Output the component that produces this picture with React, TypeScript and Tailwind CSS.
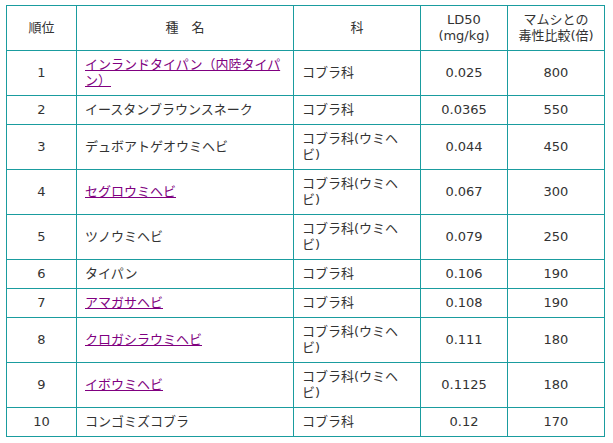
const rows = [
  { rank: "1", name: "インランドタイパン（内陸タイパン）", link: true, family: "コブラ科", ld: "0.025", ratio: "800" },
  { rank: "2", name: "イースタンブラウンスネーク", link: false, family: "コブラ科", ld: "0.0365", ratio: "550" },
  { rank: "3", name: "デュボアトゲオウミヘビ", link: false, family: "コブラ科(ウミヘビ)", ld: "0.044", ratio: "450" },
  { rank: "4", name: "セグロウミヘビ", link: true, family: "コブラ科(ウミヘビ)", ld: "0.067", ratio: "300" },
  { rank: "5", name: "ツノウミヘビ", link: false, family: "コブラ科(ウミヘビ)", ld: "0.079", ratio: "250" },
  { rank: "6", name: "タイパン", link: false, family: "コブラ科", ld: "0.106", ratio: "190" },
  { rank: "7", name: "アマガサヘビ", link: true, family: "コブラ科", ld: "0.108", ratio: "190" },
  { rank: "8", name: "クロガシラウミヘビ", link: true, family: "コブラ科(ウミヘビ)", ld: "0.111", ratio: "180" },
  { rank: "9", name: "イボウミヘビ", link: true, family: "コブラ科(ウミヘビ)", ld: "0.1125", ratio: "180" },
  { rank: "10", name: "コンゴミズコブラ", link: false, family: "コブラ科", ld: "0.12", ratio: "170" },
];

const cell = "border border-[#1a9c9f] px-[8px] py-[6px] align-middle";

export default function App() {
  return (
    <div
      className="min-h-screen bg-white pl-[6px] pt-[5px] text-[13px] leading-[16px] text-[#333333]"
      style={{ fontFamily: '"DejaVu Sans", "Noto Sans CJK JP", sans-serif' }}
    >
      <table className="w-[598px] table-fixed border-collapse">
        <colgroup>
          <col className="w-[70px]" />
          <col className="w-[217px]" />
          <col className="w-[127px]" />
          <col className="w-[87px]" />
          <col className="w-[97px]" />
        </colgroup>
        <thead>
          <tr>
            <th className={`${cell} text-center font-normal`}>順位</th>
            <th className={`${cell} text-center font-normal`}>種　名</th>
            <th className={`${cell} text-center font-normal`}>科</th>
            <th className={`${cell} text-center font-normal`}>
              LD50
              <br />
              (mg/kg)
            </th>
            <th className={`${cell} text-center font-normal`}>
              マムシとの
              <br />
              毒性比較(倍)
            </th>
          </tr>
        </thead>
        <tbody>
          {rows.map((r) => (
            <tr key={r.rank}>
              <td className={`${cell} text-center`}>{r.rank}</td>
              <td className={`${cell} text-left`}>
                {r.link ? (
                  <a href="#" className="text-[#800080] underline">
                    {r.name}
                  </a>
                ) : (
                  r.name
                )}
              </td>
              <td className={`${cell} text-left`}>{r.family}</td>
              <td className={`${cell} text-center`}>{r.ld}</td>
              <td className={`${cell} text-center`}>{r.ratio}</td>
            </tr>
          ))}
        </tbody>
      </table>
    </div>
  );
}
